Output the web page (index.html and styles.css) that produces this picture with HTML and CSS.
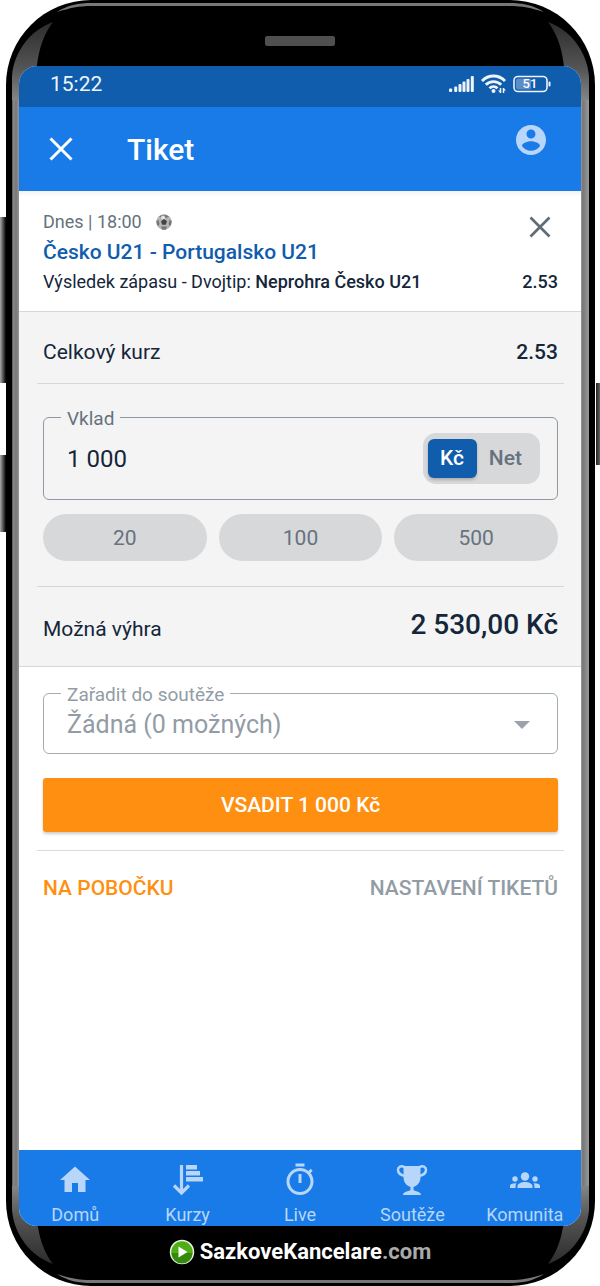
FILE: index.html
```html
<!DOCTYPE html>
<html lang="cs">
<head>
<meta charset="utf-8">
<meta name="viewport" content="width=device-width, initial-scale=1">
<title>Tiket</title>
<link rel="stylesheet" href="styles.css">
</head>
<body>
<svg class="defs" width="0" height="0" aria-hidden="true">
  <defs>
    <linearGradient id="glass" x1="0" y1="0" x2="0" y2="1">
      <stop offset="0" stop-color="#2c2c2c"/><stop offset=".6" stop-color="#555"/><stop offset="1" stop-color="#858585"/>
    </linearGradient>
    <symbol id="corner" viewBox="0 0 100 100">
      <path d="M6 100V76C8 52 24 30 47 22C38 34 31 50 30 80V100Z" fill="url(#glass)"/>
      <path d="M51 12C62 5 72 3 86 3H100V6H86C72 6 64 8 51 12Z" fill="#777"/>
    </symbol>
  </defs>
</svg>
<div class="phone">
  <span class="key key-volume"></span>
  <span class="key key-assist"></span>
  <span class="key key-power"></span>
  <span class="rim rim-left"></span>
  <span class="rim rim-right"></span>
  <span class="line line-top"></span>
  <span class="line line-bottom"></span>
  <svg class="corner corner-tl" aria-hidden="true"><use href="#corner"/></svg>
  <svg class="corner corner-tr" aria-hidden="true"><use href="#corner"/></svg>
  <svg class="corner corner-bl" aria-hidden="true"><use href="#corner"/></svg>
  <svg class="corner corner-br" aria-hidden="true"><use href="#corner"/></svg>

  <div class="forehead"><span class="speaker"></span></div>

  <div class="screen">
    <div class="status">
      <span>15:22</span>
      <div class="status-icons">
        <svg width="26" height="16" viewBox="0 0 26 16" fill="#eef4fb" aria-hidden="true">
          <rect x="0" y="12.500" width="3.200" height="3.500" rx="1"/><rect x="5.200" y="10.500" width="3" height="5.500" rx="1"/><rect x="9.500" y="8" width="3" height="8" rx="1"/><rect x="13.500" y="5.500" width="3" height="10.500" rx="1"/><rect x="17.500" y="3" width="3" height="13" rx="1"/><rect x="21.800" y="0" width="3" height="16" rx="1"/>
        </svg>
        <svg width="26" height="20" viewBox="0 0 26 20" fill="none" stroke="#eef4fb" stroke-width="2.800" aria-hidden="true">
          <path d="M1 7C7.500 .3 17.500 .3 24 7"/><path d="M4.800 10.800C9 6.600 16 6.600 20.200 10.800"/><path d="M8.500 14.300C10.800 12 14.200 12 16.500 14.300"/>
          <circle cx="12.500" cy="17" r="2" fill="#eef4fb" stroke="none"/>
          <path d="M19.500 14V19M22.500 14V19" stroke-width="1.500"/>
          <path d="M17 16.500H20L19.500 19ZM25 16.500H22L22.500 14Z" fill="#eef4fb" stroke="none"/>
        </svg>
        <svg width="38" height="18" viewBox="0 0 38 18" aria-hidden="true">
          <rect x="1" y="1.500" width="33" height="15" rx="4" fill="none" stroke="#eef4fb" stroke-width="1.600"/>
          <rect x="3" y="3.500" width="15" height="11" rx="2" fill="#5b8dc8"/>
          <rect x="35.500" y="6.500" width="2" height="5" rx="1" fill="#eef4fb"/>
          <text class="battery" x="17" y="13" text-anchor="middle">51</text>
        </svg>
      </div>
    </div>

    <header class="appbar">
      <button class="icon-button" type="button" aria-label="Zavřít">
        <svg width="24" height="24" viewBox="0 0 24 24" fill="none" stroke="#fff" stroke-width="3" aria-hidden="true"><path d="M1.500 1.500L22.500 22.500M22.500 1.500L1.500 22.500"/></svg>
      </button>
      <h1>Tiket</h1>
      <button class="icon-button account" type="button" aria-label="Účet">
        <svg width="36" height="36" viewBox="0 0 24 24" fill="#b8d6f9" aria-hidden="true"><path d="M12 2C6.480 2 2 6.480 2 12s4.480 10 10 10 10-4.480 10-10S17.520 2 12 2zm0 3c1.660 0 3 1.340 3 3s-1.340 3-3 3-3-1.340-3-3 1.340-3 3-3zm0 14.200c-2.500 0-4.710-1.280-6-3.220.03-1.990 4-3.080 6-3.080 1.990 0 5.970 1.090 6 3.080-1.290 1.940-3.500 3.220-6 3.220z"/></svg>
      </button>
    </header>

    <main>
      <section class="event">
        <div class="event-top">
          <div>
            <p class="event-time">Dnes | 18:00
              <svg width="16" height="16" viewBox="0 0 16 16" aria-hidden="true"><circle cx="8" cy="8" r="7.700" fill="#b5b5b5"/><path d="M3 2.500Q8-1 13 2.500L10.500 4Q8 2.500 5.500 4ZM.5 6.500L2.500 6 3.500 10 2 12.500Q0 10 .5 6.500ZM15.500 6.500L13.500 6 12.500 10 14 12.500Q16 10 15.500 6.500ZM5 12.500H11L10 15.500Q8 16 6 15.500Z" fill="#777"/><circle cx="7" cy="3.500" r="2" fill="#e2e2e2"/><path d="M8 5L11 7.200 9.800 10.700H6.200L5 7.200Z" fill="#444"/></svg>
            </p>
            <h2>Česko U21 - Portugalsko U21</h2>
          </div>
          <button class="icon-button" type="button" aria-label="Odebrat zápas">
            <svg width="22" height="22" viewBox="0 0 22 22" fill="none" stroke="#5f6d79" stroke-width="2.700" aria-hidden="true"><path d="M1.500 1.500L20.500 20.500M20.500 1.500L1.500 20.500"/></svg>
          </button>
        </div>
        <p class="event-bet"><span>Výsledek zápasu - Dvojtip: <strong>Neprohra Česko U21</strong></span><strong>2.53</strong></p>
      </section>

      <section class="stake">
        <div class="row row-odds"><span>Celkový kurz</span><strong>2.53</strong></div>
        <div class="stake-body">
          <fieldset class="field">
            <legend><label for="stake">Vklad</label></legend>
            <div class="stake-line">
              <input class="amount" id="stake" type="text" inputmode="numeric" value="1 000">
              <div class="toggle">
                <label><input type="radio" name="currency" checked><span>Kč</span></label>
                <label><input type="radio" name="currency"><span>Net</span></label>
              </div>
            </div>
          </fieldset>
          <div class="chips">
            <button type="button">20</button>
            <button type="button">100</button>
            <button type="button">500</button>
          </div>
        </div>
        <div class="row row-win"><span>Možná výhra</span><strong>2 530,00 Kč</strong></div>
      </section>

      <section class="submit">
        <fieldset class="field field-muted">
          <legend><label for="contest">Zařadit do soutěže</label></legend>
          <div class="select-line">
            <select id="contest"><option>Žádná (0 možných)</option></select>
            <svg width="16" height="8" viewBox="0 0 16 8" fill="#9aa3ab" aria-hidden="true"><path d="M0 0H16L8 8Z"/></svg>
          </div>
        </fieldset>
        <button class="bet" type="button">VSADIT 1 000 Kč</button>
      </section>
      <div class="links">
        <a class="branch" href="#pobocka">NA POBOČKU</a>
        <a class="settings" href="#nastaveni">NASTAVENÍ TIKETŮ</a>
      </div>
    </main>

    <nav class="tabs">
      <a href="#domu"><svg width="36" height="36" viewBox="0 0 24 24" aria-hidden="true"><path d="M10 20v-6h4v6h5v-8h3L12 3 2 12h3v8z"/></svg>Domů</a>
      <a href="#kurzy"><svg width="36" height="36" viewBox="0 0 36 36" aria-hidden="true"><path d="M16 3H27V7.500H16ZM16 9H30V13.500H16ZM16 15H33V19.500H16Z"/><path d="M11.500 3V31M4 23.500L11.500 31L19 23.500" fill="none" stroke="#b8d6f9" stroke-width="3.200"/></svg>Kurzy</a>
      <a href="#live"><svg width="36" height="36" viewBox="0 0 24 24" aria-hidden="true"><path d="M15 1H9v2h6V1zm-4 13h2V8h-2v6zm8.030-6.610l1.420-1.420c-.43-.51-.9-.99-1.410-1.410l-1.420 1.420C16.070 4.740 14.120 4 12 4c-4.970 0-9 4.030-9 9s4.020 9 9 9 9-4.030 9-9c0-2.120-.74-4.070-1.970-5.610zM12 20c-3.870 0-7-3.130-7-7s3.130-7 7-7 7 3.130 7 7-3.130 7-7 7z"/></svg>Live</a>
      <a href="#souteze"><svg width="36" height="36" viewBox="0 0 36 36" aria-hidden="true"><path d="M9.500 4H26.500V15C26.500 20 24 23.500 19.500 25V27.500C19.500 29.500 27 29 27 33H9C9 29 16.500 29.500 16.500 27.500V25C12 23.500 9.500 20 9.500 15Z"/><path d="M11 5.500C7 3 4 5 4 8C4 12 7 13 11 14M25 5.500C29 3 32 5 32 8C32 12 29 13 25 14" fill="none" stroke="#b8d6f9" stroke-width="2.500"/></svg>Soutěže</a>
      <a href="#komunita"><svg width="36" height="36" viewBox="0 0 36 36" aria-hidden="true"><circle cx="18" cy="14.500" r="4.200"/><circle cx="8" cy="17" r="2.700"/><circle cx="28" cy="17" r="2.700"/><path d="M10.500 26V24C10.500 21.500 15 20 18 20S25.500 21.500 25.500 24V26ZM3 26V24C3 22 5.500 21 9.500 21.200C8.700 22.300 8.500 23.500 8.500 26ZM33 26V24C33 22 30.500 21 26.500 21.200C27.300 22.300 27.500 23.500 27.500 26Z"/></svg>Komunita</a>
    </nav>
  </div>

  <footer class="brand">
    <svg width="26" height="26" viewBox="0 0 26 26" aria-hidden="true"><circle cx="13" cy="13" r="11.500" fill="#4fae16" stroke="#e8f2e2" stroke-width="1.500"/><path d="M2.500 14A10.500 10.500 0 0 0 23.500 14Z" fill="#348a0b"/><path d="M9.500 7.500L18.500 13L9.500 18.500Z" fill="#fff"/></svg>
    <span>SazkoveKancelare<span class="tld">.com</span></span>
  </footer>
</div>
</body>
</html>
```
FILE: styles.css
```css
* { box-sizing: border-box; }
body {
  margin: 0;
  padding: 0 5px 0 6px;
  background: #fff;
  color: #14263a;
  font-family: Roboto, "Noto Sans", sans-serif;
  font-size: 18px;
  line-height: 24px;
}
h1, h2, p { margin: 0; }
a { text-decoration: none; }
button, input, select { font: inherit; color: inherit; }
button { border: 0; padding: 0; background: none; cursor: pointer; }
strong { font-weight: 500; }
.defs { position: absolute; }

/* device body */
.phone {
  position: relative;
  display: flex;
  flex-direction: column;
  min-height: 100vh;
  padding: 0 14px 0 13px;
  border-radius: 85px;
  background: #000;
}
.corner { position: absolute; width: 100px; height: 100px; }
.corner-tl { top: 0; left: 0; }
.corner-tr { top: 0; right: 0; transform: scaleX(-1); }
.corner-bl { bottom: 0; left: 0; transform: scaleY(-1); }
.corner-br { bottom: 0; right: 0; transform: scale(-1); }
.rim {
  position: absolute;
  top: 100px;
  bottom: 100px;
  width: 8px;
  background: linear-gradient(90deg, #555, #888 20%, #777 50%, #a0a0a0);
}
.rim-left { left: 6px; }
.rim-right { right: 6px; width: 9px; background: linear-gradient(90deg, #b0b0b0, #777 30%, #999); }
.line { position: absolute; left: 100px; right: 100px; height: 3px; background: #777; }
.line-top { top: 3px; }
.line-bottom { bottom: 3px; }
.key { position: absolute; width: 6px; background: linear-gradient(90deg, #aaa, #333 70%, #000); }
.key-volume { left: -6px; top: 217px; height: 166px; }
.key-assist { left: -6px; top: 455px; height: 77px; }
.key-power { right: -5px; top: 383px; width: 4px; height: 82px; background: linear-gradient(90deg, #222, #666); }
.forehead { display: flex; justify-content: center; height: 66px; padding-top: 36px; }
.speaker { width: 70px; height: 10px; border-radius: 2px; background: #4f4f4f; }

.screen {
  position: relative;
  flex: 1;
  display: flex;
  flex-direction: column;
  overflow: hidden;
  border-radius: 18px;
  background: #fff;
}
.status {
  display: flex;
  align-items: center;
  justify-content: space-between;
  height: 41px;
  padding: 0 30px 6px 31px;
  background: #105cad;
  color: #eef4fb;
  font-size: 21px;
}
.status-icons { display: flex; align-items: center; gap: 6px; }
.battery { fill: #fff; font-size: 13px; font-weight: 500; }
.appbar {
  display: flex;
  align-items: center;
  height: 84px;
  padding: 0 30px;
  background: #197be8;
  color: #fff;
}
.appbar h1 { flex: 1; margin-left: 54px; padding-top: 2px; font-size: 30px; font-weight: 500; line-height: 36px; }
.icon-button { display: flex; }
.account { margin-right: 2px; padding-bottom: 18px; }

/* selected match */
main { flex: 1; }
.event {
  padding: 19px 23px 17px 24px;
  border-bottom: 1px solid #d5d8da;
  background: linear-gradient(#f3f3f3, #fff 6px);
}
.event-top { display: flex; justify-content: space-between; align-items: flex-start; }
.event-top .icon-button { padding: 6px 7px 0 0; }
.event-time { display: flex; align-items: center; gap: 14px; color: #66727e; }
.event h2 { margin-top: 4px; color: #105cad; font-size: 21px; font-weight: 500; line-height: 28px; }
.event-bet { display: flex; justify-content: space-between; margin-top: 4px; }

/* stake */
.stake { border-bottom: 1px solid #d5d8da; background: #f4f4f4; }
.row { display: flex; align-items: center; justify-content: space-between; font-size: 21px; }
.row-odds { height: 72px; margin: 0 17px 0 18px; padding: 8px 6px 0; border-bottom: 1px solid #d5d8da; }
.row-win { height: 80px; margin: 0 17px 0 18px; padding: 4px 6px 0; border-top: 1px solid #d5d8da; }
.row-win strong { padding-bottom: 8px; font-size: 28px; }
.stake-body { padding: 20px 23px 25px 24px; }
.field { min-width: 0; margin: 0; padding: 0 17px 0 23px; border: 1px solid #8e99a3; border-radius: 6px; }
.field legend { margin-left: -6px; padding: 4px 6px 0; color: #66727e; font-size: 19px; line-height: 22px; }
.stake-line { display: flex; align-items: center; justify-content: space-between; height: 69px; padding-bottom: 12px; }
.amount { flex: 1; min-width: 0; padding: 0; border: 0; outline: 0; background: none; font-size: 24px; }
.toggle { display: flex; padding: 6px 5px; border-radius: 13px; background: #d7d8da; }
.toggle input { position: absolute; opacity: 0; }
.toggle span {
  display: block;
  min-width: 49px;
  padding: 0 13px 0 12px;
  border-radius: 6px;
  color: #66727e;
  font-size: 21px;
  font-weight: 500;
  line-height: 39px;
  text-align: center;
}
.toggle input:checked + span { background: #105cad; color: #fff; box-shadow: 0 2px 3px #0003; }
.chips { display: grid; grid-template-columns: repeat(3, 1fr); gap: 12px; margin-top: 14px; }
.chips button { height: 47px; border-radius: 24px; background: #d7d8da; color: #66727e; font-size: 21px; }

/* submit */
.submit {
  margin: 0 17px 0 18px;
  padding: 13px 6px 18px;
  border-bottom: 1px solid #d9dbdd;
}
.field-muted { border-color: #a3abb3; }
.field-muted legend { color: #929ca5; }
.select-line { display: grid; grid-template-columns: 1fr auto; align-items: center; height: 47px; padding: 0 10px 10px 0; }
.field-muted select { appearance: none; padding: 0; border: 0; background: none; color: #929ca5; font-size: 25px; line-height: 32px; }
.bet {
  width: 100%;
  height: 54px;
  margin-top: 24px;
  border-radius: 3px;
  background: #ff8f10;
  box-shadow: 0 2px 3px #0003;
  color: #fff;
  font-size: 21px;
  font-weight: 500;
}
.links { display: flex; justify-content: space-between; padding: 25px 23px 24px 24px; font-size: 21px; font-weight: 500; }
.branch { color: #ff8f10; }
.settings { color: #929ca5; }

.tabs { display: grid; grid-template-columns: repeat(5, 1fr); height: 76px; background: #197be8; }
.tabs a { display: flex; flex-direction: column; align-items: center; padding-top: 12px; color: #b8d6f9; font-size: 18px; line-height: 34px; }
.tabs svg { flex: none; fill: #b8d6f9; }
.brand { display: flex; align-items: center; justify-content: center; gap: 5px; height: 60px; padding-bottom: 8px; color: #fff; font-size: 22px; font-weight: 700; }
.tld { color: #aaa; }
```
